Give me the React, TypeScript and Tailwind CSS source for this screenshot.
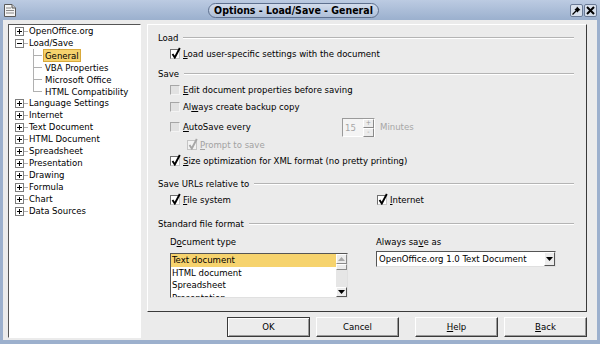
import React from "react";

type TreeItem = {
  label: string;
  level: number;
  box?: "plus" | "minus";
  selected?: boolean;
  last?: boolean;
};

const treeItems: TreeItem[] = [
  { label: "OpenOffice.org", level: 0, box: "plus" },
  { label: "Load/Save", level: 0, box: "minus" },
  { label: "General", level: 1, selected: true },
  { label: "VBA Properties", level: 1 },
  { label: "Microsoft Office", level: 1 },
  { label: "HTML Compatibility", level: 1, last: true },
  { label: "Language Settings", level: 0, box: "plus" },
  { label: "Internet", level: 0, box: "plus" },
  { label: "Text Document", level: 0, box: "plus" },
  { label: "HTML Document", level: 0, box: "plus" },
  { label: "Spreadsheet", level: 0, box: "plus" },
  { label: "Presentation", level: 0, box: "plus" },
  { label: "Drawing", level: 0, box: "plus" },
  { label: "Formula", level: 0, box: "plus" },
  { label: "Chart", level: 0, box: "plus" },
  { label: "Data Sources", level: 0, box: "plus" },
];

const ExpandBox = ({ kind }: { kind: "plus" | "minus" }) => (
  <svg width="9" height="9" viewBox="0 0 9 9" className="shrink-0">
    <rect x="0.5" y="0.5" width="8" height="8" fill="#fff" stroke="#7d7d7d" />
    <path d="M2 4.5 H7" stroke="#000" strokeWidth="1" />
    {kind === "plus" && <path d="M4.5 2 V7" stroke="#000" strokeWidth="1" />}
  </svg>
);

const Tree = () => (
  <div className="w-[133px] h-[314px] shrink-0 bg-white border border-t-[#555] border-l-[#555] border-r-white border-b-white">
    {treeItems.map((item) =>
      item.level === 0 ? (
        <div key={item.label} className="h-[12px] flex items-center pl-[6px]">
          <ExpandBox kind={item.box!} />
          <div className="w-[4px] h-px bg-[#b0b0b0]" />
          <span className="ml-[1px] whitespace-nowrap">{item.label}</span>
        </div>
      ) : (
        <div key={item.label} className="h-[12px] flex items-center pl-[24px]">
          <div className="relative w-[9px] h-full shrink-0">
            <div
              className={`absolute left-0 top-0 w-px bg-[#b0b0b0] ${item.last ? "h-[6px]" : "h-full"}`}
            />
            <div className="absolute left-0 top-[6px] w-[9px] h-px bg-[#b0b0b0]" />
          </div>
          <span
            className={`ml-[1px] px-[1px] whitespace-nowrap leading-[11px] ${
              item.selected ? "bg-[#f6d36e] border border-[#d9a93a]" : "border border-transparent"
            }`}
          >
            {item.label}
          </span>
        </div>
      )
    )}
  </div>
);

const Check = ({ checked, disabled }: { checked?: boolean; disabled?: boolean }) => (
  <span
    className={`relative w-[10px] h-[10px] shrink-0 border ${
      disabled
        ? "border-[#c4c4c4] bg-[#f2f2f2]"
        : checked
        ? "border-t-[#6f6f6f] border-l-[#6f6f6f] border-r-[#c8c8c8] border-b-[#c8c8c8] bg-white"
        : "border-t-[#a6a6a6] border-l-[#a6a6a6] border-r-[#f4f4f4] border-b-[#f4f4f4] bg-[#e2e2e2]"
    }`}
  >
    {checked && (
      <svg className="absolute left-[0px] top-[-3px]" width="10" height="12" viewBox="0 0 10 12">
        <path
          d="M1.5 7 L3.8 10.5 L8.8 1"
          fill="none"
          stroke={disabled ? "#a6a6a6" : "#000"}
          strokeWidth="1.9"
        />
      </svg>
    )}
  </span>
);

const SectionHeader = ({ children, className }: { children: React.ReactNode; className: string }) => (
  <div className={`h-[16px] flex items-center ${className}`}>
    <span className="whitespace-nowrap">{children}</span>
    <div className="flex-1 ml-[5px] h-[2px] border-t border-t-[#b4b4b4] border-b border-b-white" />
  </div>
);

const CheckRow = ({
  checked,
  disabled,
  children,
  className = "",
}: {
  checked?: boolean;
  disabled?: boolean;
  children: React.ReactNode;
  className?: string;
}) => (
  <div className={`h-[16px] flex items-center gap-[3px] ${className}`}>
    <Check checked={checked} disabled={disabled} />
    <span className={`whitespace-nowrap ${disabled ? "text-[#a2a2a2]" : ""}`}>{children}</span>
  </div>
);

const Arrow = ({ dir, color }: { dir: "up" | "down"; color: string }) => (
  <svg width="7" height="4" viewBox="0 0 7 4">
    <path d={dir === "up" ? "M0 4 L3.5 0 L7 4 Z" : "M0 0 L7 0 L3.5 4 Z"} fill={color} />
  </svg>
);

const OptionsPanel = () => (
  <div className="h-[288px] flex flex-col pl-[10px] pr-[12px] border border-t-white border-l-white border-r-[#3a3a3a] border-b-[#3a3a3a]">
    <SectionHeader className="mt-[5px]">Load</SectionHeader>
    <CheckRow checked className="ml-[12px]">
      <u>L</u>oad user-specific settings with the document
    </CheckRow>

    <SectionHeader className="mt-[4px]">Save</SectionHeader>
    <CheckRow className="ml-[12px]">
      <u>E</u>dit document properties before saving
    </CheckRow>
    <CheckRow className="ml-[12px] mt-[1px]">
      Al<u>w</u>ays create backup copy
    </CheckRow>
    <div className="h-[20px] mt-[2px] ml-[12px] flex items-center">
      <Check />
      <span className="w-[159px] ml-[3px] whitespace-nowrap">
        <u>A</u>utoSave every
      </span>
      <div className="w-[33px] h-[19px] flex border border-t-[#9a9a9a] border-l-[#9a9a9a] border-r-white border-b-white bg-[#f4f4f4]">
        <span className="flex-1 pl-[2px] leading-[17px] text-[#a6a6a6]">15</span>
        <div className="w-[11px] flex flex-col">
          <div className="flex-1 flex items-center justify-center bg-[#ececec] border border-t-white border-l-white border-r-[#8a8a8a] border-b-[#8a8a8a]">
            <span className="text-[7px] leading-none text-[#9a9a9a]">+</span>
          </div>
          <div className="flex-1 flex items-center justify-center bg-[#ececec] border border-t-white border-l-white border-r-[#8a8a8a] border-b-[#8a8a8a]">
            <span className="text-[7px] leading-none text-[#9a9a9a]">-</span>
          </div>
        </div>
      </div>
      <span className="ml-[5px] text-[#a6a6a6]">Minutes</span>
    </div>
    <CheckRow checked disabled className="ml-[29px]">
      <u>P</u>rompt to save
    </CheckRow>
    <CheckRow checked className="ml-[12px]">
      <u>S</u>ize optimization for XML format (no pretty printing)
    </CheckRow>

    <SectionHeader className="mt-[7px]">Save URLs relative to</SectionHeader>
    <div className="h-[16px] ml-[12px] flex items-center">
      <Check checked />
      <span className="w-[194px] ml-[3px] whitespace-nowrap">
        <u>F</u>ile system
      </span>
      <Check checked />
      <span className="ml-[3px] whitespace-nowrap">
        <u>I</u>nternet
      </span>
    </div>

    <SectionHeader className="mt-[8px]">Standard file format</SectionHeader>
    <div className="ml-[12px] mt-[2px] flex gap-[28px]">
      <div className="w-[178px] flex flex-col">
        <div className="h-[16px] flex items-center">
          D<u>o</u>cument type
        </div>
        <div className="mt-[3px] h-[45px] flex overflow-hidden bg-white border border-t-[#555] border-l-[#555] border-r-[#e0e0e0] border-b-[#e0e0e0]">
          <div className="flex-1 flex flex-col">
            <div className="h-[12.5px] leading-[12.5px] pl-[1px] bg-[#f6d36e]">Text document</div>
            <div className="h-[12.5px] leading-[12.5px] pl-[1px]">HTML document</div>
            <div className="h-[12.5px] leading-[12.5px] pl-[1px]">Spreadsheet</div>
            <div className="h-[12.5px] leading-[12.5px] pl-[1px]">Presentation</div>
          </div>
          <div className="w-[11px] flex flex-col bg-[#e6e6e6]">
            <div className="h-[10px] flex items-center justify-center bg-[#ececec] border border-t-white border-l-white border-r-[#8a8a8a] border-b-[#8a8a8a]">
              <Arrow dir="up" color="#a8a8a8" />
            </div>
            <div className="h-[6px] bg-[#ececec] border border-t-white border-l-white border-r-[#8a8a8a] border-b-[#8a8a8a]" />
            <div className="flex-1" />
            <div className="h-[10px] flex items-center justify-center bg-[#ececec] border border-t-white border-l-white border-r-[#555] border-b-[#555]">
              <Arrow dir="down" color="#000" />
            </div>
          </div>
        </div>
      </div>
      <div className="w-[180px] flex flex-col">
        <div className="h-[16px] flex items-center">
          Always sa<u>v</u>e as
        </div>
        <div className="mt-[1px] h-[16px] flex bg-white border border-t-[#555] border-l-[#555] border-r-[#e0e0e0] border-b-[#e0e0e0]">
          <span className="flex-1 pl-[2px] leading-[14px] whitespace-nowrap">
            OpenOffice.org 1.0 Text Document
          </span>
          <div className="w-[11px] flex items-center justify-center bg-[#ececec] border border-t-white border-l-white border-r-[#555] border-b-[#555]">
            <Arrow dir="down" color="#000" />
          </div>
        </div>
      </div>
    </div>
  </div>
);

const DialogButton = ({ children, isDefault }: { children: React.ReactNode; isDefault?: boolean }) => (
  <button
    className={`w-[83px] h-[20px] bg-[#ececec] border ${
      isDefault
        ? "border-[#3a3a3a] shadow-[inset_1px_1px_0_#fff,inset_-1px_-1px_0_#9a9a9a]"
        : "border-t-white border-l-white border-r-[#3a3a3a] border-b-[#3a3a3a] shadow-[inset_-1px_-1px_0_#9a9a9a]"
    }`}
  >
    {children}
  </button>
);

const TitleBar = () => (
  <div className="h-[20px] shrink-0 flex items-center pl-[3px] pr-[3px] bg-linear-to-b from-[#bccbe2] to-[#9bb0ce]">
    <svg width="14" height="15" viewBox="0 0 14 15" className="shrink-0">
      <path d="M1.5 1.5 H9 L12.5 5 V13.5 H1.5 Z" fill="#f4f4f4" stroke="#5a5a5a" />
      <path d="M9 1.5 V5 H12.5" fill="#d0d0d0" stroke="#5a5a5a" />
      <path d="M3 5 H8 M3 7.5 H11 M3 10 H11" stroke="#8a8a8a" />
    </svg>
    <div className="flex-1 flex justify-center">
      <div className="h-[15px] px-[5px] flex items-center rounded-full border border-[#5e708e] bg-linear-to-b from-[#d2dcec] to-[#aebfd8]">
        <span className="font-bold text-[10.5px] text-black whitespace-nowrap leading-none">
          Options - Load/Save - General
        </span>
      </div>
    </div>
    <div className="flex gap-[1px]">
      <div className="w-[13px] h-[13px] flex items-center justify-center rounded-[2px] border border-[#6a7a95] bg-[#d8e0ec]">
        <svg width="9" height="9" viewBox="0 0 9 9">
          <path d="M5 0.5 L8.5 4 L7 4.5 L5.5 6.5 L2.5 3.5 L4.5 2 Z" fill="#000" />
          <path d="M4 5 L0.5 8.5" stroke="#000" strokeWidth="1.2" />
        </svg>
      </div>
      <div className="w-[13px] h-[13px] flex items-center justify-center rounded-[2px] border border-[#6a7a95] bg-[#d8e0ec]">
        <svg width="9" height="9" viewBox="0 0 9 9">
          <path d="M1 1 L8 8 M8 1 L1 8" stroke="#000" strokeWidth="2" />
        </svg>
      </div>
    </div>
  </div>
);

export default function App() {
  return (
    <div className="w-[600px] h-[344px] flex flex-col overflow-hidden bg-[#9cb0cd] text-black text-[9.5px] font-['DejaVu_Sans_Condensed','DejaVu_Sans',sans-serif]">
      <TitleBar />
      <div className="flex-1 mx-[3px] mb-[4px] bg-[#ebebeb] flex gap-[6px] pl-[5px] pr-[10px] pt-[4px]">
        <Tree />
        <div className="flex-1 flex flex-col">
          <OptionsPanel />
          <div className="mt-[5px] flex justify-end gap-[6px]">
            <DialogButton isDefault>OK</DialogButton>
            <DialogButton>Cancel</DialogButton>
            <div className="w-[4px]" />
            <DialogButton>
              <u>H</u>elp
            </DialogButton>
            <DialogButton>
              <u>B</u>ack
            </DialogButton>
          </div>
        </div>
      </div>
    </div>
  );
}
